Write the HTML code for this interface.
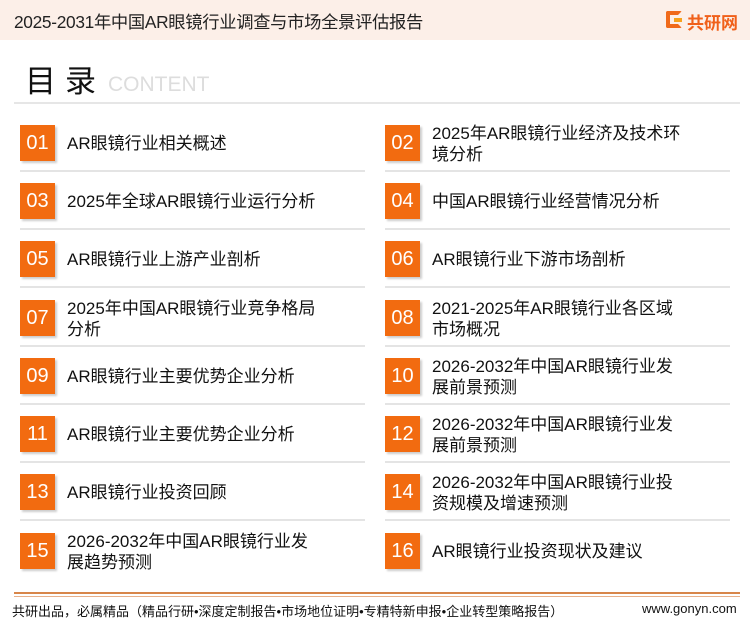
<!DOCTYPE html>
<html><head><meta charset="utf-8"><style>
*{margin:0;padding:0;box-sizing:border-box}
body{width:750px;height:622px;background:#fff;position:relative;overflow:hidden;font-family:"Liberation Sans","Noto Sans CJK SC",sans-serif;color:#111}
.hdr{position:absolute;left:0;top:0;width:750px;height:40px;background:#fcefe8}
.hdr .t{position:absolute;left:14px;top:8px;font-size:17.3px;color:#222;letter-spacing:-0.3px}
.logo{position:absolute;left:666px;top:11px;width:16px;height:17px;border:4px solid #f06a1a;border-right-color:transparent;border-radius:2px}
.logo i{position:absolute;left:4px;top:3px;width:8px;height:4px;background:#f7a21b}
.lt{position:absolute;left:687px;top:9px;font-size:17px;font-weight:bold;color:#f0601a}
.ml{position:absolute;left:25px;top:64px;font-size:31px;line-height:36px;color:#111;letter-spacing:9px}
.ct{position:absolute;left:108px;top:73px;font-size:21px;color:#ddd}
.hl{position:absolute;left:14px;top:102px;width:726px;height:2px;background:#e6e6e6}
.box{position:absolute;width:35px;height:36px;background:#f26b10;color:#fff;font-size:20px;text-align:center;line-height:36px;box-shadow:2px 2px 2px rgba(0,0,0,.2)}
.tx{position:absolute;font-size:17px;line-height:21px;color:#111}
.sep{position:absolute;height:2px;background:#e4e4e4;width:345px}
.fl{position:absolute;left:14px;width:726px;background:#d8864a}
.ft{position:absolute;top:601px;font-size:13px;color:#111}
</style></head><body>
<div class="hdr"><div class="t">2025-2031年中国AR眼镜行业调查与市场全景评估报告</div><div class="logo"><i></i></div><div class="lt">共研网</div></div>
<div class="ml">目录</div><div class="ct">CONTENT</div><div class="hl"></div>

<div class="box" style="left:20px;top:125px">01</div><div class="tx" style="left:67px;top:133px">AR眼镜行业相关概述</div>
<div class="box" style="left:385px;top:125px">02</div><div class="tx" style="left:432px;top:123px">2025年AR眼镜行业经济及技术环<br>境分析</div>
<div class="box" style="left:20px;top:183px">03</div><div class="tx" style="left:67px;top:191px">2025年全球AR眼镜行业运行分析</div>
<div class="box" style="left:385px;top:183px">04</div><div class="tx" style="left:432px;top:191px">中国AR眼镜行业经营情况分析</div>
<div class="box" style="left:20px;top:241px">05</div><div class="tx" style="left:67px;top:249px">AR眼镜行业上游产业剖析</div>
<div class="box" style="left:385px;top:241px">06</div><div class="tx" style="left:432px;top:249px">AR眼镜行业下游市场剖析</div>
<div class="box" style="left:20px;top:300px">07</div><div class="tx" style="left:67px;top:298px">2025年中国AR眼镜行业竞争格局<br>分析</div>
<div class="box" style="left:385px;top:300px">08</div><div class="tx" style="left:432px;top:298px">2021-2025年AR眼镜行业各区域<br>市场概况</div>
<div class="box" style="left:20px;top:358px">09</div><div class="tx" style="left:67px;top:366px">AR眼镜行业主要优势企业分析</div>
<div class="box" style="left:385px;top:358px">10</div><div class="tx" style="left:432px;top:356px">2026-2032年中国AR眼镜行业发<br>展前景预测</div>
<div class="box" style="left:20px;top:416px">11</div><div class="tx" style="left:67px;top:424px">AR眼镜行业主要优势企业分析</div>
<div class="box" style="left:385px;top:416px">12</div><div class="tx" style="left:432px;top:414px">2026-2032年中国AR眼镜行业发<br>展前景预测</div>
<div class="box" style="left:20px;top:474px">13</div><div class="tx" style="left:67px;top:482px">AR眼镜行业投资回顾</div>
<div class="box" style="left:385px;top:474px">14</div><div class="tx" style="left:432px;top:472px">2026-2032年中国AR眼镜行业投<br>资规模及增速预测</div>
<div class="box" style="left:20px;top:533px">15</div><div class="tx" style="left:67px;top:531px">2026-2032年中国AR眼镜行业发<br>展趋势预测</div>
<div class="box" style="left:385px;top:533px">16</div><div class="tx" style="left:432px;top:541px">AR眼镜行业投资现状及建议</div>

<div class="sep" style="left:20px;top:170px"></div><div class="sep" style="left:385px;top:170px"></div>
<div class="sep" style="left:20px;top:228px"></div><div class="sep" style="left:385px;top:228px"></div>
<div class="sep" style="left:20px;top:286px"></div><div class="sep" style="left:385px;top:286px"></div>
<div class="sep" style="left:20px;top:345px"></div><div class="sep" style="left:385px;top:345px"></div>
<div class="sep" style="left:20px;top:403px"></div><div class="sep" style="left:385px;top:403px"></div>
<div class="sep" style="left:20px;top:461px"></div><div class="sep" style="left:385px;top:461px"></div>
<div class="sep" style="left:20px;top:519px"></div><div class="sep" style="left:385px;top:519px"></div>

<div class="fl" style="top:592px;height:2px"></div><div class="fl" style="top:596px;height:1px;background:#e8b08a"></div>
<div class="ft" style="left:12px">共研出品，必属精品（精品行研•深度定制报告•市场地位证明•专精特新申报•企业转型策略报告）</div>
<div class="ft" style="left:642px">www.gonyn.com</div>
</body></html>
